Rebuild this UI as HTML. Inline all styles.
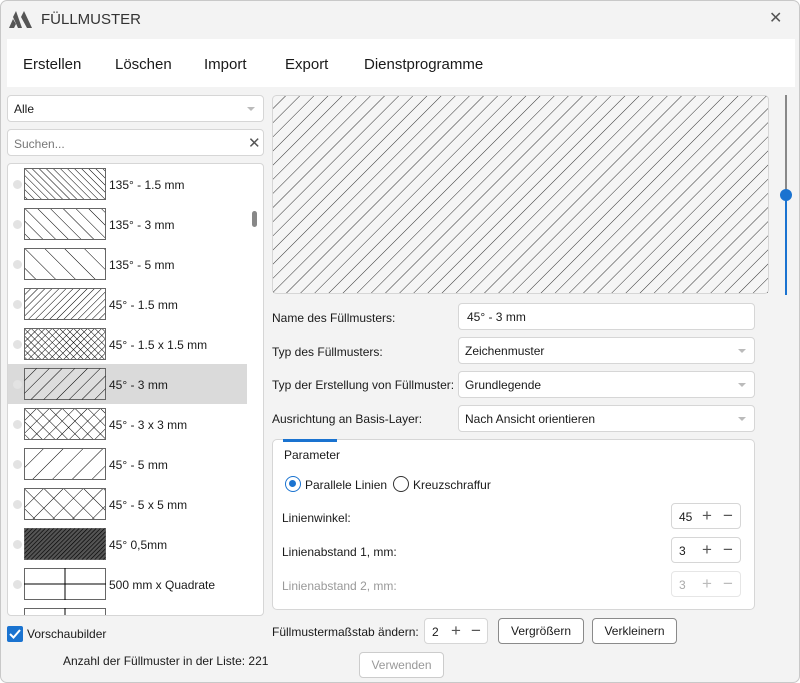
<!DOCTYPE html>
<html><head><style>
*{box-sizing:border-box;margin:0;padding:0}
body{width:800px;height:683px;overflow:hidden;background:#fff;font-family:"Liberation Sans",sans-serif;font-size:12px;color:#1a1a1a;position:relative}
.win{position:absolute;left:0;top:0;width:800px;height:683px;background:#f3f3f3;border:1px solid #c8c8c8;border-radius:7px;overflow:hidden}
.abs{position:absolute}
.box{position:absolute;background:#fff;border:1px solid #d6d6d6;border-radius:4px}
.dd:after{content:"";position:absolute;right:8px;top:50%;margin-top:-2px;border:4px solid transparent;border-top:4px solid #bbb;border-bottom:0}
.menu span{position:absolute;top:17px;font-size:15px}
.row{position:absolute;left:7px;width:239px;height:40px}
.row .dot{position:absolute;left:5px;top:16px;width:9px;height:9px;border-radius:50%;background:#e3e3e3}
.row svg{position:absolute;left:16px;top:4px}
.row .t{position:absolute;left:101px;top:14px;font-size:12px}
.lbl{position:absolute;left:271px;font-size:12px}
.spin{position:absolute;background:#fff;border:1px solid #d6d6d6;border-radius:4px;height:26px;width:70px}
.spin b{font-weight:normal;position:absolute;left:7px;top:6px}
.spin i{font-style:normal;position:absolute;top:2px;font-size:17px;color:#555}
.btn{position:absolute;background:#fff;border:1px solid #8a8a8a;border-radius:4px;height:26px;text-align:center;line-height:24px;font-size:12px}
</style></head><body>
<div class="win">
<svg class="abs" style="left:8px;top:10px" width="24" height="17" viewBox="0 0 24 17"><path d="M0 17 L4 8 L7 13 L5 17Z M4 6 L7 0 L13 17 L9 17Z M12 6 L15 0 L23 17 L18 17Z" fill="#555"/></svg>
<div class="abs" style="left:40px;top:10px;font-size:15px;color:#333">FÜLLMUSTER</div>
<div class="abs" style="left:768px;top:7px;font-size:16px;color:#555">✕</div>
<div class="abs menu" style="left:6px;top:38px;width:788px;height:48px;background:#fff">
<span style="left:16px">Erstellen</span><span style="left:108px">Löschen</span><span style="left:197px">Import</span><span style="left:278px">Export</span><span style="left:357px">Dienstprogramme</span></div>
<div class="box dd" style="left:6px;top:94px;width:257px;height:27px"><span class="abs" style="left:6px;top:6px">Alle</span></div>
<div class="box" style="left:6px;top:128px;width:257px;height:27px"><span class="abs" style="left:6px;top:7px;color:#777">Suchen...</span><span class="abs" style="left:240px;top:4px;font-size:15px;color:#555">✕</span></div>
<div class="box" style="left:6px;top:162px;width:257px;height:453px;overflow:hidden">
<div class="abs" style="left:244px;top:47px;width:5px;height:16px;background:#888;border-radius:3px"></div>
<svg width="0" height="0" style="position:absolute"><defs>
<pattern id="a15" width="5" height="5" patternUnits="userSpaceOnUse" patternTransform="rotate(-45)"><line x1="0" y1="0" x2="0" y2="5" stroke="#000" stroke-width="1"/></pattern>
<pattern id="a3" width="9" height="9" patternUnits="userSpaceOnUse" patternTransform="rotate(-45)"><line x1="0" y1="0" x2="0" y2="9" stroke="#000"/></pattern>
<pattern id="a5" width="14" height="14" patternUnits="userSpaceOnUse" patternTransform="rotate(-45)"><line x1="0" y1="0" x2="0" y2="14" stroke="#000"/></pattern>
<pattern id="b15" width="5" height="5" patternUnits="userSpaceOnUse" patternTransform="rotate(45)"><line x1="0" y1="0" x2="0" y2="5" stroke="#000"/></pattern>
<pattern id="b3" width="9" height="9" patternUnits="userSpaceOnUse" patternTransform="rotate(45)"><line x1="0" y1="0" x2="0" y2="9" stroke="#000"/></pattern>
<pattern id="b5" width="14" height="14" patternUnits="userSpaceOnUse" patternTransform="rotate(45)"><line x1="0" y1="0" x2="0" y2="14" stroke="#000"/></pattern>
<pattern id="b05" width="3" height="3" patternUnits="userSpaceOnUse" patternTransform="rotate(45)"><line x1="0" y1="0" x2="0" y2="3" stroke="#000" stroke-width="1.3"/></pattern>
<pattern id="x15" width="5" height="5" patternUnits="userSpaceOnUse" patternTransform="rotate(45)"><path d="M0 0V5M0 0H5" stroke="#000" fill="none"/></pattern>
<pattern id="x3" width="9" height="9" patternUnits="userSpaceOnUse" patternTransform="rotate(45)"><path d="M0 0V9M0 0H9" stroke="#000" fill="none"/></pattern>
<pattern id="x5" width="14" height="14" patternUnits="userSpaceOnUse" patternTransform="rotate(45)"><path d="M0 0V14M0 0H14" stroke="#000" fill="none"/></pattern>
<pattern id="big" width="10" height="10" patternUnits="userSpaceOnUse" patternTransform="rotate(45)"><line x1="0" y1="0" x2="0" y2="10" stroke="#000" stroke-width="0.8"/></pattern>
</defs></svg>
<div class="row" style="top:0px;left:0"><div class="dot"></div><svg width="82" height="32"><rect x=".5" y=".5" width="81" height="31" fill="url(#a15)" stroke="#666"/></svg><span class="t">135° - 1.5 mm</span></div>
<div class="row" style="top:40px;left:0"><div class="dot"></div><svg width="82" height="32"><rect x=".5" y=".5" width="81" height="31" fill="url(#a3)" stroke="#666"/></svg><span class="t">135° - 3 mm</span></div>
<div class="row" style="top:80px;left:0"><div class="dot"></div><svg width="82" height="32"><rect x=".5" y=".5" width="81" height="31" fill="url(#a5)" stroke="#666"/></svg><span class="t">135° - 5 mm</span></div>
<div class="row" style="top:120px;left:0"><div class="dot"></div><svg width="82" height="32"><rect x=".5" y=".5" width="81" height="31" fill="url(#b15)" stroke="#666"/></svg><span class="t">45° - 1.5 mm</span></div>
<div class="row" style="top:160px;left:0"><div class="dot"></div><svg width="82" height="32"><rect x=".5" y=".5" width="81" height="31" fill="url(#x15)" stroke="#666"/></svg><span class="t">45° - 1.5 x 1.5 mm</span></div>
<div class="row" style="top:200px;left:0;background:#dadada"><div class="dot"></div><svg width="82" height="32"><rect x=".5" y=".5" width="81" height="31" fill="#ddd" stroke="#666"/><rect x=".5" y=".5" width="81" height="31" fill="url(#b3)"/></svg><span class="t">45° - 3 mm</span></div>
<div class="row" style="top:240px;left:0"><div class="dot"></div><svg width="82" height="32"><rect x=".5" y=".5" width="81" height="31" fill="url(#x3)" stroke="#666"/></svg><span class="t">45° - 3 x 3 mm</span></div>
<div class="row" style="top:280px;left:0"><div class="dot"></div><svg width="82" height="32"><rect x=".5" y=".5" width="81" height="31" fill="url(#b5)" stroke="#666"/></svg><span class="t">45° - 5 mm</span></div>
<div class="row" style="top:320px;left:0"><div class="dot"></div><svg width="82" height="32"><rect x=".5" y=".5" width="81" height="31" fill="url(#x5)" stroke="#666"/></svg><span class="t">45° - 5 x 5 mm</span></div>
<div class="row" style="top:360px;left:0"><div class="dot"></div><svg width="82" height="32"><rect x=".5" y=".5" width="81" height="31" fill="#555" stroke="#666"/><rect x=".5" y=".5" width="81" height="31" fill="url(#b05)"/></svg><span class="t">45° 0,5mm</span></div>
<div class="row" style="top:400px;left:0"><div class="dot"></div><svg width="82" height="32"><rect x=".5" y=".5" width="81" height="31" fill="#fff" stroke="#666"/><path d="M0 16H82M41 0V32" stroke="#000"/></svg><span class="t">500 mm x Quadrate</span></div>
<div class="row" style="top:440px;left:0"><svg width="82" height="32"><rect x=".5" y=".5" width="81" height="31" fill="#fff" stroke="#666"/><path d="M41 0V32" stroke="#000"/></svg></div>
</div>
<div class="abs" style="left:6px;top:625px;width:16px;height:16px;background:#1a73d0;border-radius:2px"><svg width="16" height="16"><path d="M3 8l3.5 3.5L13 4" stroke="#fff" stroke-width="2" fill="none"/></svg></div>
<div class="abs" style="left:26px;top:626px;font-size:12px">Vorschaubilder</div>
<div class="abs" style="left:62px;top:653px;font-size:12px">Anzahl der Füllmuster in der Liste: 221</div>

<svg class="abs" style="left:271px;top:94px" width="497" height="199"><rect x=".5" y=".5" width="496" height="198" rx="4" fill="#f5f5f5" stroke="#d6d6d6"/><rect x="1" y="1" width="495" height="197" fill="url(#big)"/></svg>
<div class="abs" style="left:784px;top:94px;width:2px;height:100px;background:#888"></div>
<div class="abs" style="left:784px;top:194px;width:2px;height:100px;background:#1a73d0"></div>
<div class="abs" style="left:779px;top:188px;width:12px;height:12px;border-radius:50%;background:#1a73d0"></div>

<div class="lbl" style="top:310px">Name des Füllmusters:</div>
<div class="box" style="left:457px;top:302px;width:297px;height:27px"><span class="abs" style="left:8px;top:6px">45° - 3 mm</span></div>
<div class="lbl" style="top:344px">Typ des Füllmusters:</div>
<div class="box dd" style="left:457px;top:336px;width:297px;height:27px"><span class="abs" style="left:6px;top:6px">Zeichenmuster</span></div>
<div class="lbl" style="top:377px">Typ der Erstellung von Füllmuster:</div>
<div class="box dd" style="left:457px;top:370px;width:297px;height:27px"><span class="abs" style="left:6px;top:6px">Grundlegende</span></div>
<div class="lbl" style="top:411px">Ausrichtung an Basis-Layer:</div>
<div class="box dd" style="left:457px;top:404px;width:297px;height:27px"><span class="abs" style="left:6px;top:6px">Nach Ansicht orientieren</span></div>

<div class="box" style="left:271px;top:438px;width:483px;height:171px;border-radius:5px">
<div class="abs" style="left:10px;top:-1px;width:54px;height:3px;background:#1a73d0"></div>
<div class="abs" style="left:11px;top:8px">Parameter</div>
<div class="abs" style="left:12px;top:36px;width:16px;height:16px;border:1.5px solid #1a73d0;border-radius:50%"><div class="abs" style="left:3px;top:3px;width:7px;height:7px;border-radius:50%;background:#1a73d0"></div></div>
<div class="abs" style="left:32px;top:38px">Parallele Linien</div>
<div class="abs" style="left:120px;top:36px;width:16px;height:16px;border:1.5px solid #333;border-radius:50%"></div>
<div class="abs" style="left:140px;top:38px">Kreuzschraffur</div>
<div class="abs" style="left:9px;top:71px">Linienwinkel:</div>
<div class="abs" style="left:9px;top:105px">Linienabstand 1, mm:</div>
<div class="abs" style="left:9px;top:139px;color:#999">Linienabstand 2, mm:</div>
</div>
<div class="spin" style="left:670px;top:502px"><b>45</b><i style="left:30px">+</i><i style="left:51px">−</i></div>
<div class="spin" style="left:670px;top:536px"><b>3</b><i style="left:30px">+</i><i style="left:51px">−</i></div>
<div class="spin" style="left:670px;top:570px;border-color:#e6e6e6;color:#aaa"><b>3</b><i style="left:30px;color:#bbb">+</i><i style="left:51px;color:#bbb">−</i></div>
<div class="lbl" style="top:624px">Füllmustermaßstab ändern:</div>
<div class="spin" style="left:423px;top:617px;width:64px"><b>2</b><i style="left:26px">+</i><i style="left:46px">−</i></div>
<div class="btn" style="left:497px;top:617px;width:86px">Vergrößern</div>
<div class="btn" style="left:591px;top:617px;width:85px">Verkleinern</div>
<div class="btn" style="left:358px;top:651px;width:85px;border-color:#ccc;color:#999">Verwenden</div>
</div>
</body></html>
